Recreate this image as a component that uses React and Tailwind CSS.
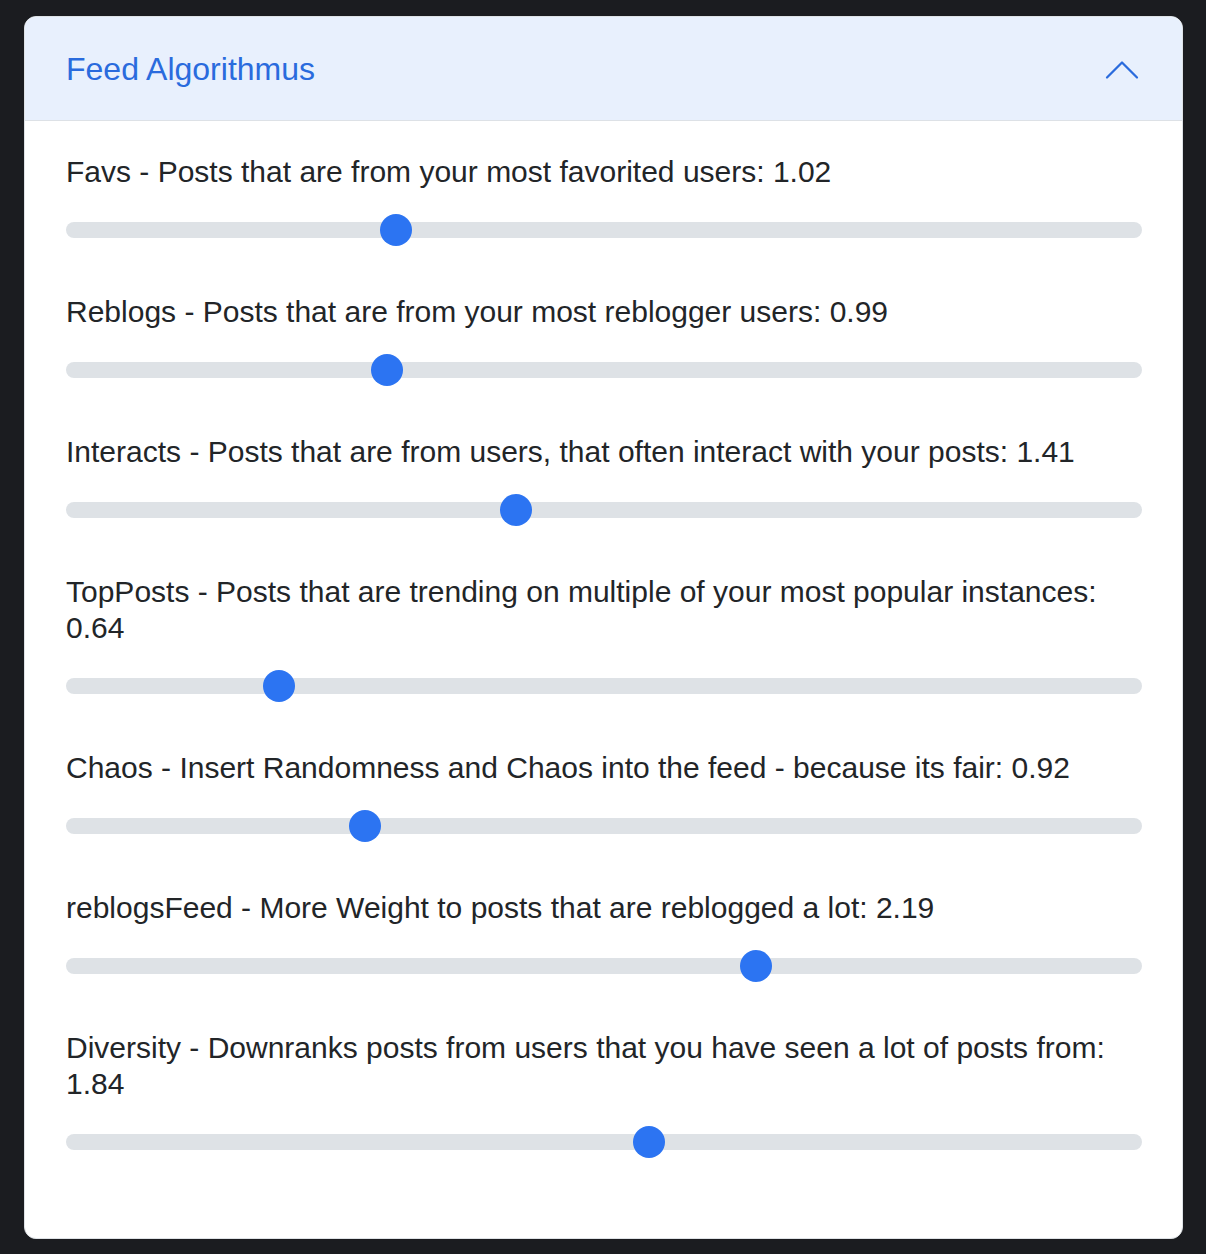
import React from "react";

const items = [
  { label: "Favs - Posts that are from your most favorited users: 1.02", v: 1.02 },
  { label: "Reblogs - Posts that are from your most reblogger users: 0.99", v: 0.99 },
  { label: "Interacts - Posts that are from users, that often interact with your posts: 1.41", v: 1.41 },
  { label: "TopPosts - Posts that are trending on multiple of your most popular instances: 0.64", v: 0.64 },
  { label: "Chaos - Insert Randomness and Chaos into the feed - because its fair: 0.92", v: 0.92 },
  { label: "reblogsFeed - More Weight to posts that are reblogged a lot: 2.19", v: 2.19 },
  { label: "Diversity - Downranks posts from users that you have seen a lot of posts from: 1.84", v: 1.84 },
];

const MAX = 3.39;

function Slider({ v }) {
  const frac = v / MAX;
  return (
    <div className="mt-[24px] h-[32px] flex items-center">
      <div className="relative w-full h-[16px] rounded-full bg-[#dee2e6]">
        <div
          className="absolute top-1/2 -translate-y-1/2 w-[32px] h-[32px] rounded-full bg-[#2c74f2]"
          style={{ left: `calc((100% - 32px) * ${frac})` }}
        />
      </div>
    </div>
  );
}

export default function App() {
  return (
    <div
      className="min-h-[1254px] bg-[#1b1c20] pt-[16px] pb-[15px]"
      style={{ fontFamily: '"Liberation Sans", Arial, Helvetica, sans-serif' }}
    >
      <div className="ml-[24px] w-[1159px] bg-white border border-[#dee2e6] rounded-[12px] overflow-hidden">
        <div className="h-[104px] bg-[#e8f0fd] border-b border-[#dde1e6] flex items-center justify-between pl-[41px] pr-[40px]">
          <span className="text-[32px] text-[#2a6bdd] leading-none">Feed Algorithmus</span>
          <svg width="40" height="40" viewBox="0 0 16 16" fill="none" stroke="#2a6bdd" strokeWidth="0.9" strokeLinecap="round" strokeLinejoin="round" className="mt-[2px]">
            <path d="M2 11L8 5L14 11" />
          </svg>
        </div>
        <div className="pl-[41px] pr-[40px] pt-[33px] pb-[32px]">
          {items.map((it, i) => (
            <div key={i} className="mb-[48px]">
              <div className="text-[30px] leading-[36px] text-[#222528]">{it.label}</div>
              <Slider v={it.v} />
            </div>
          ))}
        </div>
      </div>
    </div>
  );
}
